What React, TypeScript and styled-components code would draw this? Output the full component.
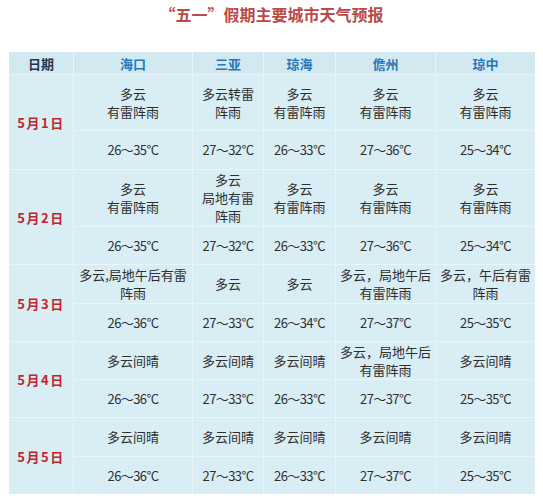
import React from 'react'
import styled, { createGlobalStyle } from 'styled-components'

const GlobalStyle = createGlobalStyle`
  html, body {
    margin: 0;
    padding: 0;
    background: #ffffff;
  }
  body {
    font-family: "Noto Sans CJK SC", "Noto Sans", sans-serif;
  }
`

type DayRow = {
  date: string
  weather: string[][]
  temps: string[]
  weatherHeight: number
  tempHeight: number
}

const cities = ['海口', '三亚', '琼海', '儋州', '琼中']

const days: DayRow[] = [
  {
    date: '5月1日',
    weather: [['多云', '有雷阵雨'], ['多云转雷', '阵雨'], ['多云', '有雷阵雨'], ['多云', '有雷阵雨'], ['多云', '有雷阵雨']],
    temps: ['26～35°C', '27～32°C', '26～33°C', '27～36°C', '25～34°C'],
    weatherHeight: 55,
    tempHeight: 38,
  },
  {
    date: '5月2日',
    weather: [['多云', '有雷阵雨'], ['多云', '局地有雷', '阵雨'], ['多云', '有雷阵雨'], ['多云', '有雷阵雨'], ['多云', '有雷阵雨']],
    temps: ['26～35°C', '27～32°C', '26～33°C', '27～36°C', '25～34°C'],
    weatherHeight: 56,
    tempHeight: 37,
  },
  {
    date: '5月3日',
    weather: [['多云,局地午后有雷', '阵雨'], ['多云'], ['多云'], ['多云，局地午后', '有雷阵雨'], ['多云，午后有雷', '阵雨']],
    temps: ['26～36°C', '27～33°C', '26～34°C', '27～37°C', '25～35°C'],
    weatherHeight: 38,
    tempHeight: 37,
  },
  {
    date: '5月4日',
    weather: [['多云间晴'], ['多云间晴'], ['多云间晴'], ['多云，局地午后', '有雷阵雨'], ['多云间晴']],
    temps: ['26～36°C', '27～33°C', '26～33°C', '27～37°C', '25～35°C'],
    weatherHeight: 37,
    tempHeight: 37,
  },
  {
    date: '5月5日',
    weather: [['多云间晴'], ['多云间晴'], ['多云间晴'], ['多云间晴'], ['多云间晴']],
    temps: ['26～36°C', '27～33°C', '26～33°C', '27～37°C', '25～35°C'],
    weatherHeight: 38,
    tempHeight: 37,
  },
]

const rowHeights = [22, ...days.flatMap((d) => [d.weatherHeight, d.tempHeight])]

const Page = styled.div`
  width: 543px;
  height: 500px;
  padding: 0 9px;
  box-sizing: border-box;
  overflow: hidden;
`

const Title = styled.h1`
  margin: 0;
  height: 52px;
  padding-top: 4px;
  box-sizing: border-box;
  text-align: center;
  font-size: 16px;
  line-height: 20px;
  font-weight: 700;
  color: #b94a48;
`

const Table = styled.div<{ $rows: string }>`
  display: grid;
  grid-template-columns: 64px 118px 70px 71px 99px 99px;
  grid-template-rows: ${(p) => p.$rows};
  gap: 1px;
  width: 526px;
  background: #eaf5f9;
`

const HeadCell = styled.div<{ $city?: boolean }>`
  display: flex;
  align-items: center;
  justify-content: center;
  background: #d2e9f2;
  font-size: 13px;
  font-weight: 700;
  color: ${(p) => (p.$city ? '#2479b8' : '#1f3550')};
`

const DateCell = styled.div<{ $row: number }>`
  grid-column: 1;
  grid-row: ${(p) => p.$row} / span 2;
  display: flex;
  align-items: center;
  justify-content: center;
  background: #d9edf4;
  font-size: 13px;
  font-weight: 700;
  color: #c3252c;
  letter-spacing: 1.5px;
`

const Cell = styled.div<{ $temp?: boolean }>`
  display: flex;
  flex-direction: column;
  align-items: center;
  justify-content: center;
  background: #d9edf4;
  font-size: 13px;
  line-height: 18px;
  color: #2f2f2f;
  text-align: center;
  white-space: nowrap;
  letter-spacing: ${(p) => (p.$temp ? '-0.6px' : '0')};
`

const App = () => {
  return (
    <>
      <GlobalStyle />
      <Page>
        <Title>“五一”假期主要城市天气预报</Title>
        <Table $rows={rowHeights.map((h) => `${h}px`).join(' ')}>
          <HeadCell>日期</HeadCell>
          {cities.map((c) => (
            <HeadCell key={c} $city>
              {c}
            </HeadCell>
          ))}
          {days.map((d, idx) => (
            <React.Fragment key={d.date}>
              <DateCell $row={2 + idx * 2}>{d.date}</DateCell>
              {d.weather.map((lines, i) => (
                <Cell key={'w' + i}>
                  {lines.map((l) => (
                    <span key={l}>{l}</span>
                  ))}
                </Cell>
              ))}
              {d.temps.map((t, i) => (
                <Cell key={'t' + i} $temp>
                  {t}
                </Cell>
              ))}
            </React.Fragment>
          ))}
        </Table>
      </Page>
    </>
  )
}

export default App
